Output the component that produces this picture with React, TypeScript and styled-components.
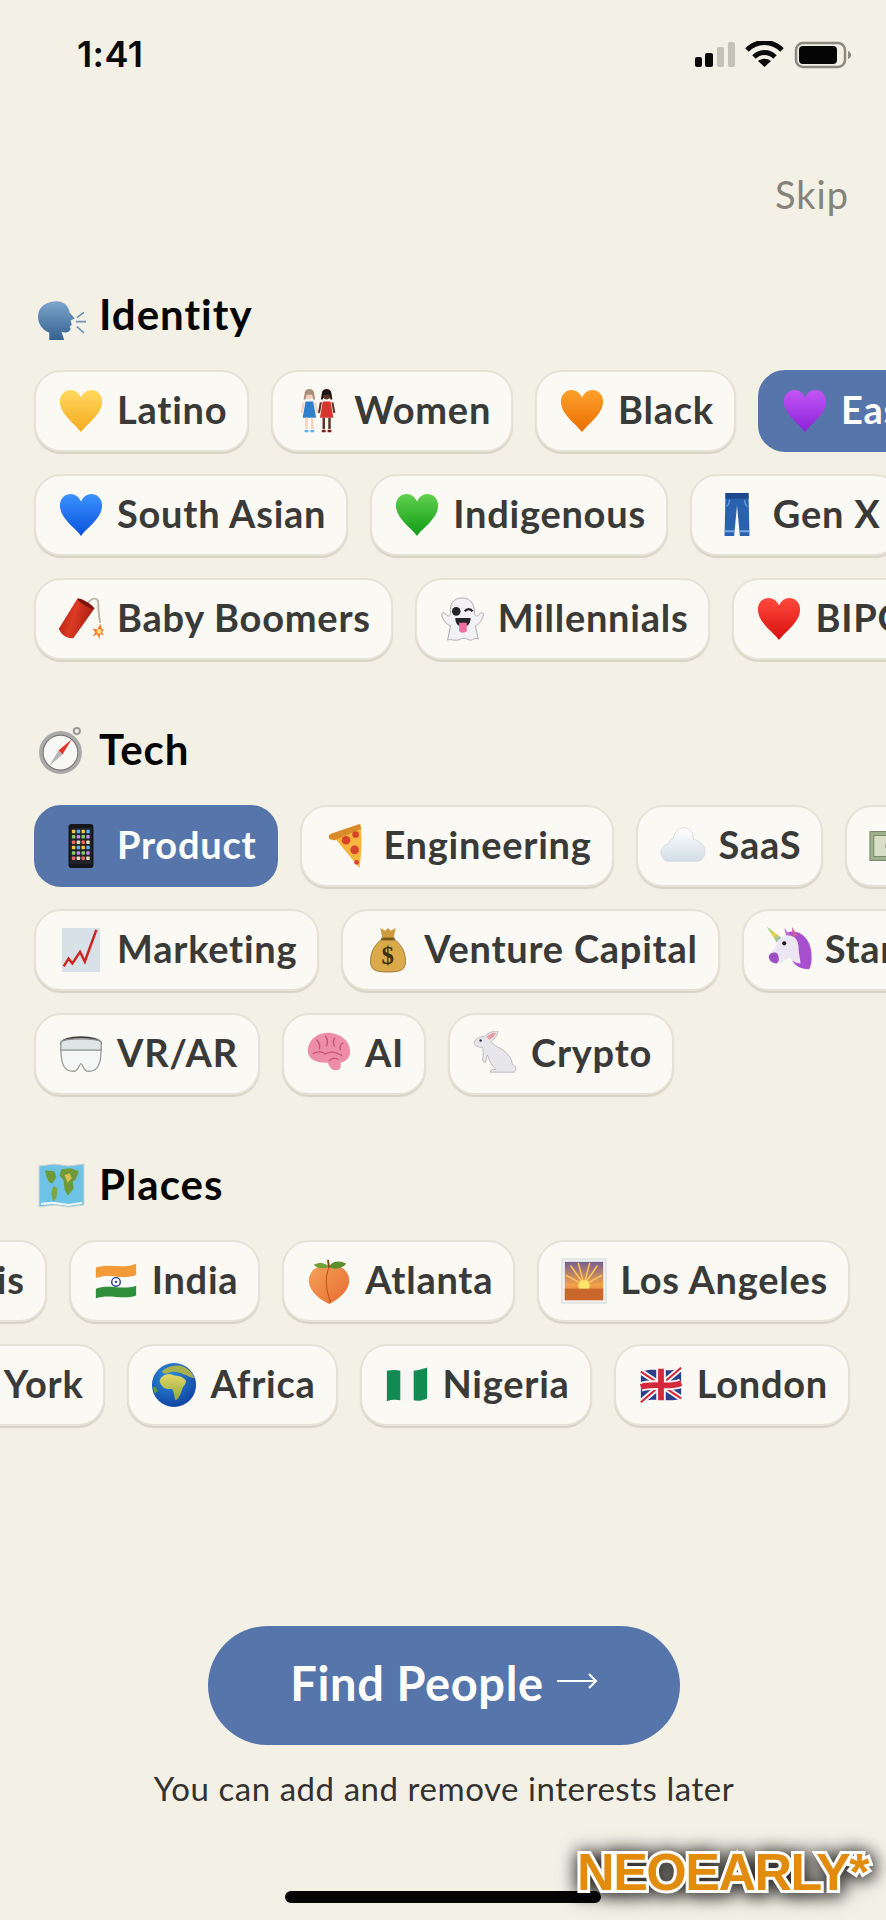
import React from "react";
import styled, { createGlobalStyle } from "styled-components";

const Global = createGlobalStyle`
  html, body { margin: 0; padding: 0; background: #f3f0e6; }
  #root { width: 886px; }
`;

const Page = styled.main`
  position: relative;
  width: 886px;
  height: 1920px;
  overflow: hidden;
  background: #f3f0e6;
  font-family: "Lato", "Noto Sans", sans-serif;
  font-variant-ligatures: none;
  display: flex;
  flex-direction: column;
`;

const StatusBar = styled.header`
  height: 110px;
  padding: 0 34px 0 77px;
  display: flex;
  align-items: center;
  justify-content: space-between;
  box-sizing: border-box;
`;
const Time = styled.span`
  font-family: "Inter", sans-serif;
  font-weight: 600;
  font-size: 36px;
  letter-spacing: 0.4px;
  padding-bottom: 2px;
  color: #0a0a0a;
`;
const StatusIcons = styled.div`
  display: flex;
  align-items: center;
`;
const SkipRow = styled.div`
  margin-top: 61px;
  height: 50px;
  padding-right: 37px;
  display: flex;
  justify-content: flex-end;
  align-items: center;
`;
const Skip = styled.span`
  font-size: 38px;
  letter-spacing: 1px;
  padding-bottom: 5px;
  color: #85837a;
  font-weight: 400;
`;
const Section = styled.section<{ $first?: boolean }>`
  margin-top: ${(p) => (p.$first ? "69px" : "65px")};
`;
const Heading = styled.h2`
  margin: 0 0 30px;
  height: 50px;
  padding-left: 37px;
  display: flex;
  align-items: center;
  gap: 13px;
  font-size: 42px;
  letter-spacing: 1px;
  font-weight: 700;
  color: #050505;
`;
const HeadingText = styled.span`
  padding-bottom: 2px;
`;
const Rows = styled.div`
  display: flex;
  flex-direction: column;
  gap: 22px;
`;
const Row = styled.div<{ $end?: boolean }>`
  display: flex;
  gap: 22px;
  justify-content: ${(p) => (p.$end ? "flex-end" : "flex-start")};
  padding: ${(p) => (p.$end ? "0 36px 0 0" : "0 0 0 34px")};
`;
const Chip = styled.div<{ $on?: boolean }>`
  flex: none;
  height: 82px;
  box-sizing: border-box;
  padding: 0 20px 0 22px;
  display: inline-flex;
  align-items: center;
  gap: 13px;
  border-radius: 27px;
  font-size: 38px;
  letter-spacing: 0.75px;
  font-weight: 700;
  white-space: nowrap;
  color: ${(p) => (p.$on ? "#ffffff" : "#3a3a38")};
  background: ${(p) => (p.$on ? "#5675aa" : "#fbf9f3")};
  border: 2px solid ${(p) => (p.$on ? "#5675aa" : "#e5e2d6")};
  box-shadow: ${(p) => (p.$on ? "none" : "0 2px 1px #d6d3c6")};
`;
const ChipLabel = styled.span`
  padding-bottom: 5px;
`;
const EmojiSvg = styled.svg<{ $size?: number }>`
  flex: none;
  width: ${(p) => p.$size ?? 46}px;
  height: ${(p) => p.$size ?? 46}px;
  display: block;
`;
const Cta = styled.button`
  align-self: center;
  margin: 200px 0 0 2px;
  width: 472px;
  height: 119px;
  padding: 0 0 6px;
  border: none;
  border-radius: 60px;
  background: #5675aa;
  color: #fff;
  font-family: inherit;
  font-size: 47px;
  letter-spacing: 0.6px;
  font-weight: 700;
  display: flex;
  align-items: center;
  justify-content: center;
  gap: 12px;
`;
const CtaArrow = styled.svg`
  width: 42px;
  height: 20px;
  margin-top: -4px;
  display: block;
`;
const Caption = styled.p`
  margin: 25px 0 0 2px;
  padding-bottom: 4px;
  height: 36px;
  line-height: 36px;
  text-align: center;
  font-size: 33px;
  color: #333230;
  letter-spacing: 0.55px;
`;
const HomeBar = styled.div`
  align-self: center;
  margin: 81px 0 0 0;
  width: 316px;
  height: 12px;
  border-radius: 6px;
  background: #050505;
`;
const Watermark = styled.div`
  position: absolute;
  right: 18px;
  bottom: 25px;
  font-family: "Liberation Sans", sans-serif;
  font-weight: 700;
  font-size: 52px;
  letter-spacing: -1.5px;
  line-height: 46px;
  color: #e28c0e;
  -webkit-text-stroke: 6px #fff;
  paint-order: stroke fill;
  filter: drop-shadow(0 0 9px rgba(0, 0, 0, 0.75)) drop-shadow(3px 4px 7px rgba(0, 0, 0, 0.45));
`;

const heartPath =
  "M24 46C19 38 2 28 2 14C2 6 8 2 13 2C18 2 22 5 24 10C26 5 30 2 35 2C40 2 46 6 46 14C46 28 29 38 24 46Z";

function Heart({ id, a, b }: { id: string; a: string; b: string }) {
  return (
    <>
      <defs>
        <linearGradient id={id} x1="0" y1="0" x2="0" y2="1">
          <stop offset="0" stopColor={a} />
          <stop offset="1" stopColor={b} />
        </linearGradient>
      </defs>
      <path d={heartPath} fill={`url(#${id})`} />
    </>
  );
}

function Art({ name }: { name: string }) {
  switch (name) {
    case "yellow":
      return <Heart id="hy" a="#ffd95e" b="#f5a91f" />;
    case "orange":
      return <Heart id="ho" a="#ffa02c" b="#e86f00" />;
    case "purple":
      return <Heart id="hp" a="#c455f5" b="#8a23d8" />;
    case "blue":
      return <Heart id="hb" a="#3b93ff" b="#0a50dc" />;
    case "green":
      return <Heart id="hg" a="#5fd14d" b="#119a17" />;
    case "red":
      return <Heart id="hr" a="#ff4a3d" b="#d70f0f" />;
    case "women":
      return (
        <>
          <circle cx="15" cy="7" r="5" fill="#f4d2bd" />
          <path d="M10 6a5 5 0 0 1 10 0l1 6h-2l-1-5h-6l-1 5h-2z" fill="#a98e7e" />
          <path d="M11 14h8l3 17H8z" fill="#2f7fc9" />
          <path d="M9 15l-2 11M21 15l2 11" stroke="#f4d2bd" strokeWidth="2.200" />
          <path d="M12 31v12M18 31v12" stroke="#f4d2bd" strokeWidth="2.600" />
          <path d="M10 45h4M16 45h4" stroke="#5ab4e8" strokeWidth="2.600" />
          <circle cx="33" cy="7" r="5" fill="#5b3626" />
          <path d="M28 6a5 5 0 0 1 10 0l1 6h-2l-1-5h-6l-1 5h-2z" fill="#1f1512" />
          <path d="M29 14h8l3 17H26z" fill="#d8352e" />
          <path d="M27 15l-2 11M39 15l2 11" stroke="#5b3626" strokeWidth="2.200" />
          <path d="M30 31v12M36 31v12" stroke="#5b3626" strokeWidth="2.600" />
          <path d="M28 45h4M34 45h4" stroke="#7c1f1c" strokeWidth="2.600" />
        </>
      );
    case "jeans":
      return (
        <>
          <path d="M12 1h24l1 45H27L24 14 21 46H11z" fill="#2a62b0" />
          <path d="M12 1h24v6H12z" fill="#1d4a8c" />
          <path d="M11 41h10M27 41h10" stroke="#7aa8dd" strokeWidth="2" />
          <path d="M16 8c0 4-1 6-3 7M32 8c0 4 1 6 3 7" stroke="#6d9bd6" strokeWidth="1.400" fill="none" />
        </>
      );
    case "dynamite":
      return (
        <>
          <defs>
            <linearGradient id="dy" x1="0" y1="0" x2="1" y2="0.3">
              <stop offset="0" stopColor="#a81d12" />
              <stop offset="0.5" stopColor="#dd3a25" />
              <stop offset="1" stopColor="#a81d12" />
            </linearGradient>
          </defs>
          <path d="M31 8c4-7 11-7 11 0s1 14 2 20" stroke="#b9b5a8" strokeWidth="2" fill="none" />
          <path d="M20 3l18 10-22 31c-6 1-13-3-15-10z" fill="url(#dy)" />
          <path d="M20 3c3-2 16 6 18 10-2 2-16-6-18-10z" fill="#7e150d" />
          <path d="M44 29l2 6 2-1-2 4 2 3-4-1-1 5-2-5-5 2 3-4-3-4 5 1z" fill="#f1772a" />
          <circle cx="43" cy="37" r="2.500" fill="#ffe27a" />
        </>
      );
    case "ghost":
      return (
        <>
          <path d="M24 2c9 0 13 7 13 15 0 3 2 6 5 2 3-3 5-1 4 2-2 6-5 9-8 10 1 5 2 10 3 14-4-2-5 1-8 1-3 0-4-2-7-2s-6 3-10 2c-3 0-4-1-7 0 1-5 2-10 3-15-4-1-7-5-9-10-1-3 2-5 4-2 3 4 5 1 5-2C11 9 15 2 24 2z" fill="#f2f2f4" stroke="#a9a9ae" strokeWidth="1" />
          <circle cx="18" cy="16" r="4.500" fill="#26262a" />
          <path d="M27 16c2-3 6-3 8 0" stroke="#26262a" strokeWidth="2.400" fill="none" />
          <path d="M17 23h16c0 6-3 9-8 9s-8-3-8-9z" fill="#26262a" />
          <path d="M21 28h8v8c0 3-8 3-8 0z" fill="#ef6f9e" />
        </>
      );
    case "head":
      return (
        <>
          <defs>
            <linearGradient id="hd" x1="0" y1="0" x2="0" y2="1">
              <stop offset="0" stopColor="#7ea6cc" />
              <stop offset="1" stopColor="#335f90" />
            </linearGradient>
          </defs>
          <path d="M1 25C1 15 10 10 19 10C27 10 31 15 32 21L37 27L33 29L34 33L32 35L33 37C32 41 28 41 24 40L27 49H12L12 41C5 38 1 32 1 25Z" fill="url(#hd)" />
          <path d="M38 30H48M39 26L46 21M39 35L46 41" stroke="#6f92b6" strokeWidth="1.600" />
        </>
      );
    case "compass":
      return (
        <>
          <circle cx="39" cy="5" r="3" fill="none" stroke="#9a9a9a" strokeWidth="2" />
          <circle cx="23" cy="26" r="21" fill="#a9a9a9" />
          <circle cx="23" cy="26" r="17" fill="#f7f7f5" stroke="#77736e" strokeWidth="1" />
          <path d="M34 13L21 24l4 4z" fill="#e2352a" />
          <path d="M12 39l9-15 4 4z" fill="#b5b5b5" />
        </>
      );
    case "map":
      return (
        <>
          <path d="M2 5l15-2 14 2 15-2v40l-15 2-14-2-15 2z" fill="#6cc3e6" stroke="#d2d2cc" />
          <path d="M8 9l9 1 2 6-4 6-3-1-3-6zM24 8l9-1 8 3-3 8-3 2 1 7-6 7-3-6-1-9-4-5z" fill="#6f9a3a" />
          <path d="M27 14l5-2 2 5-4 4z" fill="#d8c34f" />
          <path d="M16 24l4 3-1 9-3 4-2-8z" fill="#7fa63f" />
          <path d="M4 41l12-1 15 2 13-2v2l-13 2-15-2-12 1z" fill="#eef5f8" />
        </>
      );
    case "phone":
      return (
        <>
          <rect x="11" y="1" width="26" height="46" rx="3.500" fill="#16161a" />
          <rect x="13" y="5" width="22" height="38" fill="#20232c" />
          {[0, 1, 2, 3, 4, 5].map((r) =>
            [0, 1, 2, 3].map((c) => (
              <rect
                key={`${r}${c}`}
                x={14.5 + c * 5}
                y={7 + r * 5.6}
                width="3.600"
                height="3.600"
                rx="0.800"
                fill={["#f7c53a", "#e8dbb5", "#7fd35a", "#50b4ee", "#f0685d", "#c88ae8"][(r * 2 + c * 3) % 6]}
              />
            ))
          )}
        </>
      );
    case "pizza":
      return (
        <>
          <path d="M9 13L38 1c2 14 1 32-1 46z" fill="#f6b53d" />
          <path d="M6 17C4 14 5 12 8 11L37 1l2 5L11 18z" fill="#d98a2b" />
          <circle cx="23" cy="18" r="4.500" fill="#d8432c" />
          <circle cx="33" cy="12" r="3.500" fill="#d8432c" />
          <circle cx="32" cy="28" r="4.500" fill="#d8432c" />
          <circle cx="34" cy="41" r="2.500" fill="#d8432c" />
        </>
      );
    case "cloud":
      return (
        <>
          <defs>
            <linearGradient id="cl" x1="0" y1="0" x2="0" y2="1">
              <stop offset="0" stopColor="#ffffff" />
              <stop offset="1" stopColor="#d3dde6" />
            </linearGradient>
          </defs>
          <path d="M9 40C4 40 1 35 1 31c0-5 4-9 8-9 0-3 2-6 5-6 1-7 6-11 11-11 6 0 10 5 10 12 6 1 12 6 12 13 0 6-4 10-9 10z" fill="url(#cl)" stroke="#cfd6dc" strokeWidth="0.800" />
        </>
      );
    case "bill":
      return (
        <>
          <rect x="1" y="9" width="46" height="30" fill="#9fb38d" stroke="#6b7c5e" />
          <rect x="5" y="13" width="38" height="22" fill="#d8dfc6" stroke="#77886a" />
          <circle cx="24" cy="24" r="7" fill="#8ea07c" />
        </>
      );
    case "chart":
      return (
        <>
          <rect x="4" y="1" width="40" height="46" fill="#d9e1e8" />
          <path d="M40 3L28 36 23 26 15 38 11 33 6 41" fill="none" stroke="#c8261e" strokeWidth="2.600" />
        </>
      );
    case "bag":
      return (
        <>
          <path d="M17 13C7 21 5 31 6 39c1 6 6 8 18 8s17-2 18-8c1-8-1-18-11-26z" fill="#d9a94a" stroke="#8a6720" strokeWidth="0.800" />
          <path d="M16 1l5 3 3-3 3 3 5-3-2 10c-4 2-8 2-12 0z" fill="#cf9c3f" />
          <path d="M17 11h14v3H17z" fill="#7a5a1c" />
          <text x="24" y="39" textAnchor="middle" fontFamily="Liberation Serif, serif" fontSize="26" fontWeight="700" fill="#3f2f10">$</text>
        </>
      );
    case "unicorn":
      return (
        <>
          <defs>
            <linearGradient id="hn" x1="0" y1="0" x2="1" y2="1">
              <stop offset="0" stopColor="#6fd06a" />
              <stop offset="0.5" stopColor="#f1d34a" />
              <stop offset="1" stopColor="#59b6ea" />
            </linearGradient>
          </defs>
          <path d="M22 6C34 1 45 11 47 24C48 32 48 39 45 44C37 44 31 41 28 36L26 14Z" fill="#a84fd0" />
          <path d="M22 9C30 8 34 14 34 22C34 28 36 34 36 38C30 38 27 34 24 32C20 34 16 38 11 38C6 38 2 34 3 30C4 26 9 24 10 20C12 14 16 10 22 9Z" fill="#ece6f2" />
          <path d="M3 30C5 26 10 26 12 28C14 32 14 36 11 38C6 38 2 34 3 30Z" fill="#9b4fc0" />
          <path d="M16 11L1 0L11 16Z" fill="url(#hn)" />
          <path d="M21 9L19 1L25 8Z" fill="#c071cf" />
          <path d="M28 10L27 0L33 9Z" fill="#cf5f9b" />
          <circle cx="19" cy="17" r="2.200" fill="#1e1b24" />
        </>
      );
    case "goggles":
      return (
        <>
          <path d="M3 14C3 4 45 4 45 14" stroke="#3d3d3d" strokeWidth="2.200" fill="none" />
          <path d="M3 18C3 36 7 42 16 42C22 42 22 34 24 34C26 34 26 42 32 42C41 42 45 36 45 18Z" fill="#f5f7f7" stroke="#9a9c9c" strokeWidth="1.400" />
          <path d="M3 12C4 7 44 7 45 12L45 20L3 20Z" fill="#dfe4e4" stroke="#8d9192" strokeWidth="1.200" />
        </>
      );
    case "brain":
      return (
        <>
          <path d="M2 22C1 12 9 3 20 2C32 1 45 8 46 20C47 28 41 32 36 33C37 37 36 41 31 41C27 41 24 37 23 33C14 34 3 31 2 22Z" fill="#ee8ea6" />
          <path d="M11 9c3 3 4 6 3 10M20 5c3 3 3 8 1 11M30 7c-2 3-2 6 0 9M39 12c-3 2-4 5-3 8M7 24c4-3 10-3 13 0M20 24c5-3 12-2 18 2M24 31c3-3 7-3 10-1" stroke="#c55876" strokeWidth="1.500" fill="none" />
        </>
      );
    case "rabbit":
      return (
        <>
          <path d="M2 12C4 8 9 5 13 6C16 2 21 0 27 0C27 4 24 8 20 11C22 14 24 15 27 17C35 20 42 28 42 35C46 36 47 41 44 43H19C19 41 22 40 25 40C21 36 18 32 17 27L16 25L14 33L11 31C12 26 12 20 11 17C7 17 3 16 2 12Z" fill="#e7e7eb" stroke="#aeaeb2" strokeWidth="0.800" />
          <path d="M15 6C18 3 22 1 25 2C24 5 21 8 18 9Z" fill="#e3a0a5" />
          <circle cx="9" cy="10" r="1.300" fill="#333" />
        </>
      );
    case "india":
      return (
        <>
          <path d="M3 10c14-5 28 2 42-4v12c-14 5-28-2-42 3z" fill="#f29b38" />
          <path d="M3 21c14-5 28 2 42-3v11c-14 5-28-2-42 3z" fill="#fafafa" />
          <path d="M3 32c14-5 28 2 42-3v10c-14 5-28-2-42 3z" fill="#2f8f3a" />
          <circle cx="24" cy="25" r="4.500" fill="none" stroke="#27408f" strokeWidth="1.500" />
          <circle cx="24" cy="25" r="1.200" fill="#27408f" />
        </>
      );
    case "peach":
      return (
        <>
          <defs>
            <linearGradient id="pc" x1="0" y1="0" x2="1" y2="1">
              <stop offset="0" stopColor="#f6a25c" />
              <stop offset="1" stopColor="#e56a2f" />
            </linearGradient>
          </defs>
          <path d="M24 10C12 5 2 14 3 25c1 10 11 18 21 23 10-5 20-13 21-23 1-11-9-20-21-15z" fill="url(#pc)" />
          <path d="M24 10c-4 8-4 22 2 37" stroke="#c95420" strokeWidth="1.200" fill="none" />
          <path d="M24 9c3-6 11-7 18-3-4 5-12 7-18 3z" fill="#5c8f2c" />
          <path d="M24 9C20 5 14 4 8 7c4 4 11 5 16 2z" fill="#6ea236" />
          <path d="M24 10l-1-8" stroke="#7b4a1e" strokeWidth="2" />
        </>
      );
    case "sunset":
      return (
        <>
          <rect x="1" y="1" width="46" height="46" fill="#f0f1f2" stroke="#d4d5d3" />
          <defs>
            <linearGradient id="ss" x1="0" y1="0" x2="0" y2="1">
              <stop offset="0" stopColor="#75608f" />
              <stop offset="0.6" stopColor="#f2a14a" />
              <stop offset="1" stopColor="#d66e2d" />
            </linearGradient>
          </defs>
          <rect x="4" y="4" width="40" height="40" fill="url(#ss)" />
          <path d="M24 28L10 8M24 28L18 5M24 28L30 5M24 28L38 8M24 28L5 18M24 28L43 18" stroke="#ffc65c" strokeWidth="1.600" />
          <circle cx="24" cy="29" r="6" fill="#ffe36b" />
          <rect x="4" y="32" width="40" height="12" fill="#c9662c" />
        </>
      );
    case "globe":
      return (
        <>
          <defs>
            <radialGradient id="gb" cx="0.4" cy="0.3" r="0.8">
              <stop offset="0" stopColor="#2f8fdc" />
              <stop offset="1" stopColor="#0c3c9c" />
            </radialGradient>
            <linearGradient id="gl" x1="0" y1="0" x2="0" y2="1">
              <stop offset="0" stopColor="#e4d868" />
              <stop offset="1" stopColor="#8fa83c" />
            </linearGradient>
          </defs>
          <circle cx="24" cy="24" r="23" fill="url(#gb)" />
          <path d="M9 20C10 15 15 12 21 13C26 15 31 14 34 17C36 19 38 19 35 24C32 27 32 32 30 35C28 39 26 41 25 39C24 34 24 31 22 28C16 29 11 27 9 20Z" fill="url(#gl)" />
          <path d="M11 10C17 4 28 2 34 5C41 8 44 13 45 17C41 16 38 14 34 13C28 10 22 9 17 12C14 12 12 12 11 10Z" fill="#a9b04e" />
          <path d="M2 26c2-1 4 1 5 4l-3 3z" fill="#5f9a3f" />
        </>
      );
    case "nigeria":
      return (
        <>
          <path d="M3 9c14-4 28 2 42-3v32c-14 5-28-1-42 3z" fill="#f5f5f3" />
          <path d="M3 9c5-1 10-1 14 0v31c-4-1-9-1-14 1z" fill="#128a52" />
          <path d="M31 9c5 0 9-2 14-3v32c-5 2-9 3-14 2z" fill="#128a52" />
        </>
      );
    case "uk":
      return (
        <>
          <path d="M3 10c14-5 28 2 42-4v32c-14 5-28-2-42 4z" fill="#2b3f8c" />
          <path d="M3 10l42 28M45 6L3 42" stroke="#f5f5f5" strokeWidth="6" />
          <path d="M3 10l42 28M45 6L3 42" stroke="#d4293a" strokeWidth="2.200" />
          <path d="M24 7v33M3 26c14-5 28 2 42-4" stroke="#f5f5f5" strokeWidth="10" fill="none" />
          <path d="M24 7v33M3 26c14-5 28 2 42-4" stroke="#d4293a" strokeWidth="6" fill="none" />
        </>
      );
    default:
      return null;
  }
}

function Emoji({ name, size }: { name: string; size?: number }) {
  return (
    <EmojiSvg viewBox="0 0 48 48" $size={size} aria-hidden="true">
      <Art name={name} />
    </EmojiSvg>
  );
}

type ChipData = [string, string, boolean?];

const identity: ChipData[][] = [
  [["yellow", "Latino"], ["women", "Women"], ["orange", "Black"], ["purple", "East Asian", true]],
  [["blue", "South Asian"], ["green", "Indigenous"], ["jeans", "Gen X"]],
  [["dynamite", "Baby Boomers"], ["ghost", "Millennials"], ["red", "BIPOC"]],
];
const tech: ChipData[][] = [
  [["phone", "Product", true], ["pizza", "Engineering"], ["cloud", "SaaS"], ["bill", "Fintech"]],
  [["chart", "Marketing"], ["bag", "Venture Capital"], ["unicorn", "Startups"]],
  [["goggles", "VR/AR"], ["brain", "AI"], ["rabbit", "Crypto"]],
];
const places: ChipData[][] = [
  [["map", "Paris"], ["india", "India"], ["peach", "Atlanta"], ["sunset", "Los Angeles"]],
  [["yellow", "New York"], ["globe", "Africa"], ["nigeria", "Nigeria"], ["uk", "London"]],
];

function Group({ icon, title, rows, first, end }: { icon: string; title: string; rows: ChipData[][]; first?: boolean; end?: boolean }) {
  return (
    <Section $first={first}>
      <Heading>
        <Emoji name={icon} size={49} />
        <HeadingText>{title}</HeadingText>
      </Heading>
      <Rows>
        {rows.map((row, i) => (
          <Row key={i} $end={end}>
            {row.map(([e, label, on]) => (
              <Chip key={label} $on={on}>
                <Emoji name={e} />
                <ChipLabel>{label}</ChipLabel>
              </Chip>
            ))}
          </Row>
        ))}
      </Rows>
    </Section>
  );
}

export default function App() {
  return (
    <Page>
      <Global />
      <StatusBar>
        <Time>1:41</Time>
        <StatusIcons>
          <svg width="158" height="28" viewBox="0 0 158 28">
            <rect x="1" y="16" width="7" height="10" rx="2" fill="#0a0a0a" />
            <rect x="11" y="12" width="8" height="14" rx="2" fill="#0a0a0a" />
            <rect x="23" y="6" width="7" height="20" rx="2" fill="#c5c3b9" />
            <rect x="34" y="1" width="7" height="25" rx="2" fill="#c5c3b9" />
            <path d="M53 9C63 -1 78 -1 88 9" fill="none" stroke="#0a0a0a" strokeWidth="5" />
            <path d="M60 16c6-6 15-6 21 0" fill="none" stroke="#0a0a0a" strokeWidth="5" />
            <path d="M64 20c4-3 9-3 13 0l-6.500 6z" fill="#0a0a0a" />
            <rect x="102" y="2" width="49" height="24" rx="7" fill="none" stroke="#8c8a80" strokeWidth="2.500" />
            <rect x="105" y="5" width="38" height="18" rx="4" fill="#050505" />
            <path d="M154 10c2 1 3 2 3 4s-1 3-3 4z" fill="#8c8a80" />
          </svg>
        </StatusIcons>
      </StatusBar>
      <SkipRow>
        <Skip>Skip</Skip>
      </SkipRow>
      <Group first icon="head" title="Identity" rows={identity} />
      <Group icon="compass" title="Tech" rows={tech} />
      <Group icon="map" title="Places" rows={places} end />
      <Cta>
        Find People
        <CtaArrow viewBox="0 0 42 20" aria-hidden="true">
          <path d="M1 10H40M33 3L40 10L33 17" fill="none" stroke="#fff" strokeWidth="2.200" />
        </CtaArrow>
      </Cta>
      <Caption>You can add and remove interests later</Caption>
      <HomeBar />
      <Watermark>NEOEARLY*</Watermark>
    </Page>
  );
}
